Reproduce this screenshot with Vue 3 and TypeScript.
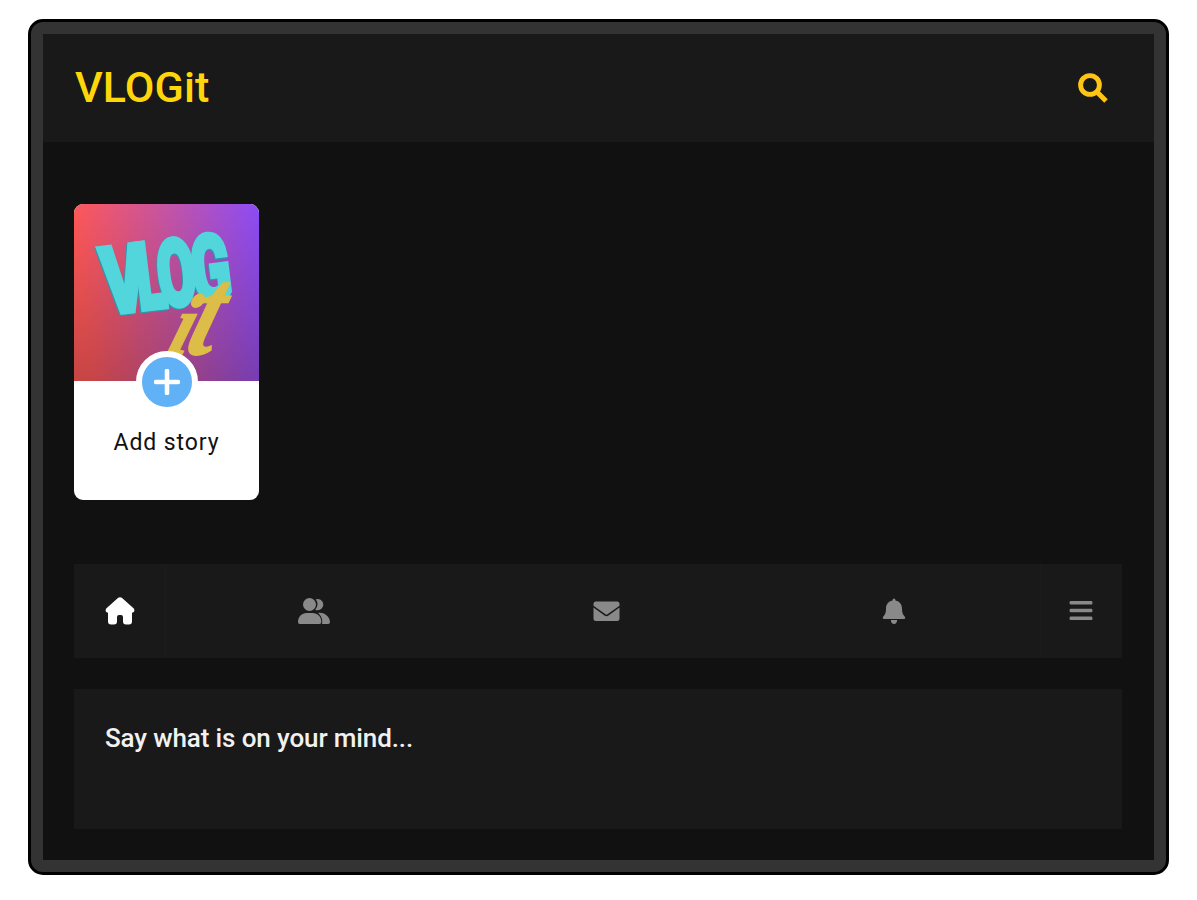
<script setup lang="ts">
type Tab = { name: string; box: string; paths: string[]; width: number; height: number }
type Letter = { char: string; x: number; width: number }

const letters: Letter[] = [
  { char: 'V', x: 2, width: 44 },
  { char: 'L', x: 36, width: 29 },
  { char: 'O', x: 58, width: 38 },
  { char: 'G', x: 92, width: 39 },
]

const tabs: Tab[] = [
  {
    name: 'home', box: '0 0 30 28', width: 30, height: 28,
    paths: ['M13.2 .8Q15 -.4 16.800 .8L28.800 11.500Q30 13.500 28.700 15Q28 15.700 27 15.700V24.500Q27 27.500 24 27.500H21Q18 27.500 18 24.500V20Q18 18 16 18H14Q12 18 12 20V24.500Q12 27.500 9 27.500H6Q3 27.500 3 24.500V15.700Q2 15.700 1.300 15Q0 13.500 1.200 11.500Z'],
  },
  {
    name: 'friends', box: '0 0 34 28', width: 34, height: 28,
    paths: [
      'M12.500 1a6.500 6.500 0 1 1 0 13a6.500 6.500 0 0 1 0-13Z',
      'M18.800 2.200a5.700 5.700 0 1 1 1.700 11.100q-1.300 0-2.300-.5a8 8 0 0 0 .6-10.600Z',
      'M1 25C1 19.500 5 16 9.500 16H15.500C20.500 16 24.300 19.500 24.300 25Q24.300 27 22.500 27H2.800Q1 27 1 25Z',
      'M21 15.900C28 15 32.700 20 33 25Q33 27 31.200 27H25C26 22.500 24.300 18.600 21 15.900Z',
    ],
  },
  {
    name: 'messages', box: '0 0 27 21', width: 27, height: 21,
    paths: [
      'M3 .5H24Q26.500 .5 26.500 3V4.800L14.500 13.300Q13.500 14 12.500 13.300L.5 4.800V3Q.5 .5 3 .5Z',
      'M.5 6.500L11.500 14.500Q13.500 15.800 15.500 14.500L26.500 6.500V17.500Q26.500 20 24 20H3Q.5 20 .5 17.500Z',
    ],
  },
  {
    name: 'alerts', box: '0 0 24 27', width: 24, height: 27,
    paths: [
      'M12 .5Q13.500 .5 13.500 2.500C18 3.400 20 6.700 20 10.500C20 14.500 20.800 16.500 22.700 18.500Q24 20.700 22 21H2Q0 20.700 1.300 18.500C3.200 16.500 4 14.500 4 10.500C4 6.700 6 3.400 10.500 2.500Q10.500 .5 12 .5Z',
      'M8.800 22H15.200Q14.800 26 12 26Q9.200 26 8.800 22Z',
    ],
  },
  {
    name: 'menu', box: '0 0 24 22', width: 24, height: 22,
    paths: [
      'M1.500 1H22.500Q23.500 1 23.500 2.800T22.500 4.500H1.500Q.5 4.500 .5 2.800T1.500 1Z',
      'M1.500 8.800H22.500Q23.500 8.800 23.500 10.600T22.500 12.300H1.500Q.5 12.300 .5 10.600T1.500 8.800Z',
      'M1.500 16.600H22.500Q23.500 16.600 23.500 18.400T22.500 20.100H1.500Q.5 20.100 .5 18.400T1.500 16.600Z',
    ],
  },
]
</script>

<template>
  <div class="page">
    <div class="frame">
      <div class="screen">
        <header class="bar">
          <span class="brand">VLOGit</span>
          <svg class="search" viewBox="0 0 31 31" width="31" height="31">
            <circle cx="12" cy="12" r="9.400" fill="none" stroke="#ffc414" stroke-width="4.900" />
            <path d="M18.500 18.500L28 28" stroke="#ffc414" stroke-width="5" />
          </svg>
        </header>

        <main class="content">
          <section class="story">
            <svg class="cover" viewBox="0 0 185 177" width="185" height="177">
              <defs>
                <linearGradient id="sweep" x1="0" y1="0.100" x2="1" y2="0">
                  <stop offset="0" stop-color="#ff5858" />
                  <stop offset="0.500" stop-color="#c654a4" />
                  <stop offset="1" stop-color="#8c4cf6" />
                </linearGradient>
                <linearGradient id="shade" x1="0" y1="0" x2="0" y2="1">
                  <stop offset="0" stop-color="#000" stop-opacity="0" />
                  <stop offset="1" stop-color="#000" stop-opacity="0.220" />
                </linearGradient>
              </defs>
              <rect width="185" height="177" fill="url(#sweep)" />
              <rect width="185" height="177" fill="url(#shade)" />
              <g class="vlog" transform="translate(30 110.500) rotate(-7)">
                <text class="deep" y="1"><tspan v-for="l in letters" :key="l.char" :x="l.x - 1" :textLength="l.width" lengthAdjust="spacingAndGlyphs">{{ l.char }}</tspan></text>
                <text class="face"><tspan v-for="l in letters" :key="l.char" :x="l.x" :textLength="l.width" lengthAdjust="spacingAndGlyphs">{{ l.char }}</tspan></text>
              </g>
              <g class="it">
                <text class="i" transform="translate(91 150) skewX(-18)" textLength="22" lengthAdjust="spacingAndGlyphs">i</text>
                <text class="t" transform="translate(109 150) skewX(-18)" textLength="27" lengthAdjust="spacingAndGlyphs">t</text>
              </g>
            </svg>
            <div class="add">
              <svg viewBox="0 0 26 26" width="26" height="26">
                <path d="M13 2V24M2 13H24" stroke="#fff" stroke-width="4.600" stroke-linecap="round" />
              </svg>
            </div>
            <span class="caption">Add story</span>
          </section>

          <nav class="tabs">
            <div v-for="tab in tabs" :key="tab.name" class="tab" :class="tab.name">
              <svg :viewBox="tab.box" :width="tab.width" :height="tab.height">
                <path v-for="d in tab.paths" :key="d" :d="d" fill="currentColor" />
              </svg>
            </div>
          </nav>

          <section class="composer"><span class="prompt">Say what is on your mind...</span></section>
        </main>
      </div>
    </div>
  </div>
</template>

<style>
body { margin: 0; background: #fff; }
</style>

<style scoped>
.page { box-sizing: border-box; width: 1197px; height: 900px; padding: 19px 28px; background: #fff; font-family: Roboto, "Liberation Sans", sans-serif; overflow: hidden; }
.frame { box-sizing: border-box; width: 1141px; height: 856px; border: 3px solid #000; border-radius: 15px; background: #333; padding: 12px; }
.screen { height: 826px; background: #111; overflow: hidden; }
.bar { box-sizing: border-box; height: 108px; background: #191919; display: flex; align-items: center; justify-content: space-between; padding: 0 45px 0 32px; }
.brand { color: #ffd60a; font-size: 43px; font-weight: 500; line-height: 50px; letter-spacing: 0.1px; margin-bottom: 3px; }
.content { padding: 62px 32px 0 31px; display: flex; flex-direction: column; }
.story { width: 185px; height: 296px; border-radius: 9px; overflow: hidden; background: #fff; display: flex; flex-direction: column; align-items: center; }
.cover { display: block; flex: none; }
.vlog text { font-family: Roboto, sans-serif; font-weight: 900; font-size: 93px; stroke-width: 5px; }
.deep { fill: #259caf; stroke: #259caf; }
.face { fill: #53d5dc; stroke: #53d5dc; }
.it { font-family: "Liberation Serif", serif; font-style: italic; font-weight: 700; fill: #dcbd47; stroke: #dcbd47; stroke-width: 1.500px; }
.i { font-size: 86px; }
.t { font-size: 126px; }
.add { position: relative; box-sizing: border-box; flex: none; width: 62px; height: 62px; margin-top: -30px; border: 6px solid #fff; border-radius: 50%; background: #60b1f6; display: flex; align-items: center; justify-content: center; }
.caption { margin-top: 16px; color: #111; font-size: 23px; line-height: 28px; letter-spacing: 0.9px; }
.tabs { margin-top: 64px; height: 94px; background: #191919; display: grid; grid-template-columns: 92px 1fr 1fr 1fr 82px; }
.tab { display: flex; align-items: center; justify-content: center; color: #898989; }
.home { color: #fff; border-right: 1px solid #1c1c1c; }
.friends { padding-left: 4px; }
.messages { padding-left: 7px; }
.menu { padding-right: 2px; border-left: 1px solid #1c1c1c; }
.composer { box-sizing: border-box; margin-top: 31px; height: 140px; background: #191919; padding: 33px 31px; }
.prompt { display: block; color: #f1f1f1; font-size: 26px; font-weight: 500; line-height: 32px; letter-spacing: -0.12px; white-space: nowrap; }
</style>
